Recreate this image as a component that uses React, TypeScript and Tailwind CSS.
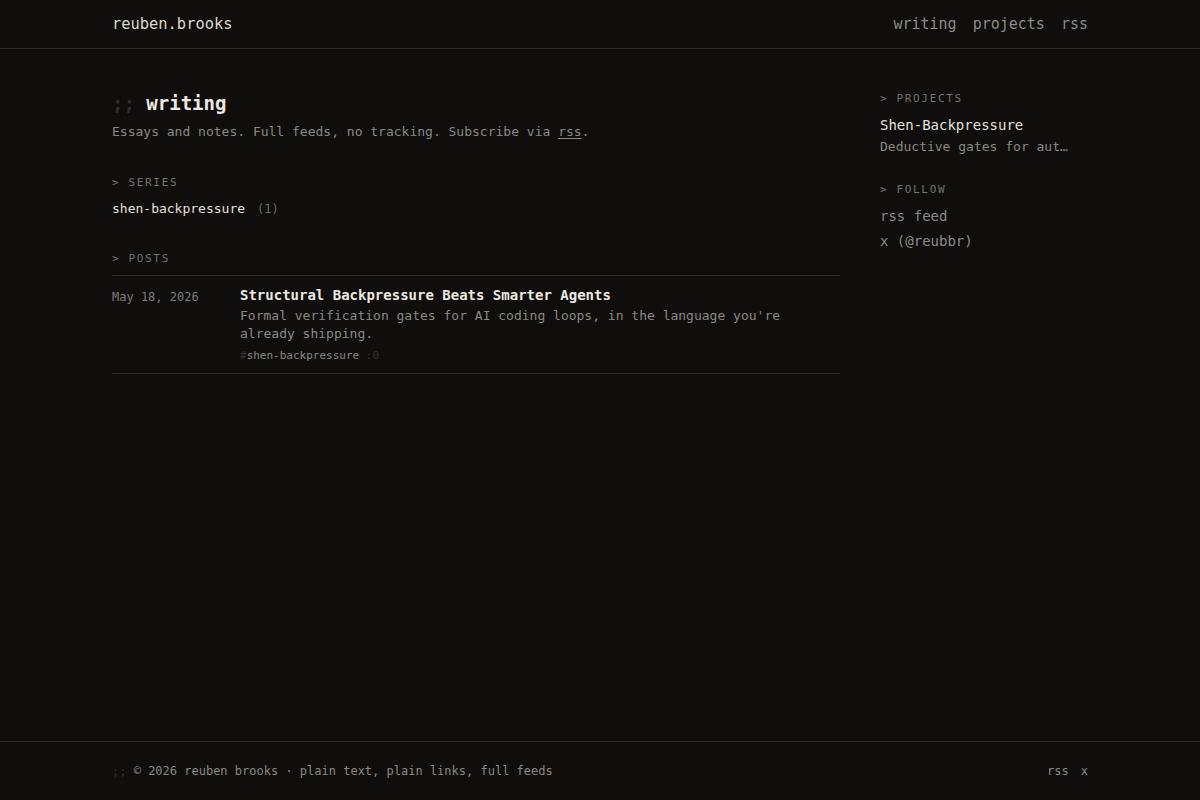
import React from "react";

const mono = "font-['DejaVu_Sans_Mono','Liberation_Mono',monospace]";

function SectionLabel({ children }: { children: React.ReactNode }) {
  return (
    <div className="text-[11px] leading-4 uppercase tracking-[0.15em] text-[#73726f]">
      &gt; {children}
    </div>
  );
}

export default function App() {
  return (
    <div className={`${mono} min-h-screen flex flex-col bg-[#0f0e0d] text-[#d8d5cd]`}>
      {/* Header */}
      <header className="border-b border-[#2a2927]">
        <div className="max-w-5xl mx-auto px-6 py-3 flex items-center justify-between">
          <a className="text-[15.4px] leading-6 text-[#dcd9d1]">reuben.brooks</a>
          <nav className="flex gap-4 text-[15px] leading-6 text-[#8c8a85]">
            <a>writing</a>
            <a>projects</a>
            <a>rss</a>
          </nav>
        </div>
      </header>

      {/* Main */}
      <main className="flex-1">
        <div className="max-w-5xl mx-auto px-6 pt-10 grid grid-cols-[1fr_208px] gap-10">
          <div>
            <h1 className="text-[19px] leading-7 font-bold text-[#ede9e0]">
              <span className="text-[#2e2d2b]">;;</span> writing
            </h1>
            <p className="mt-[5px] text-[13px] leading-5 text-[#8a8882]">
              Essays and notes. Full feeds, no tracking. Subscribe via{" "}
              <a className="underline underline-offset-2 decoration-[#8a8882]">rss</a>.
            </p>

            <section className="mt-[33px]">
              <SectionLabel>series</SectionLabel>
              <div className="mt-2 flex items-baseline gap-3 leading-5">
                <a className="text-[13px] text-[#e4e1d9]">shen-backpressure</a>
                <span className="text-[12px] text-[#6c6a65]">(1)</span>
              </div>
            </section>

            <section className="mt-8">
              <SectionLabel>posts</SectionLabel>
              <div className="mt-2 border-t border-b border-[#2a2927] pt-[9px] pb-[9px] grid grid-cols-[128px_1fr]">
                <div className="text-[12px] leading-5 pt-0.5 text-[#7d7b76]">May 18, 2026</div>
                <div>
                  <a className="block text-[14px] leading-5 font-bold text-[#ede9e0]">
                    Structural Backpressure Beats Smarter Agents
                  </a>
                  <p className="mt-[2px] text-[13px] leading-[18px] text-[#8a8882] max-w-[560px]">
                    Formal verification gates for AI coding loops, in the language you're already shipping.
                  </p>
                  <div className="mt-[5px] text-[11px] leading-4 text-[#8a8882]">
                    <span className="text-[#35342f]">#</span>shen-backpressure{" "}
                    <span className="text-[#35342f]">:0</span>
                  </div>
                </div>
              </div>
            </section>
          </div>

          {/* Sidebar */}
          <aside className="pt-0.5">
            <section>
              <SectionLabel>projects</SectionLabel>
              <a className="mt-2 block text-[14px] leading-5 text-[#e4e1d9]">Shen-Backpressure</a>
              <p className="mt-[3px] text-[13px] leading-[18px] text-[#8a8882] whitespace-nowrap">
                Deductive gates for aut…
              </p>
            </section>
            <section className="mt-[26px]">
              <SectionLabel>follow</SectionLabel>
              <div className="mt-2 flex flex-col gap-[5px] text-[14px] leading-5 text-[#8c8a85]">
                <a>rss feed</a>
                <a>x (@reubbr)</a>
              </div>
            </section>
          </aside>
        </div>
      </main>

      {/* Footer */}
      <footer className="border-t border-[#2a2927]">
        <div className="max-w-5xl mx-auto px-6 py-5 flex items-center justify-between text-[12px] leading-[18px] text-[#8a8882]">
          <div>
            <span className="text-[#2e2d2b]">;;</span> © 2026 reuben brooks · plain text, plain links, full feeds
          </div>
          <div className="flex gap-3">
            <a>rss</a>
            <a>x</a>
          </div>
        </div>
      </footer>
    </div>
  );
}
